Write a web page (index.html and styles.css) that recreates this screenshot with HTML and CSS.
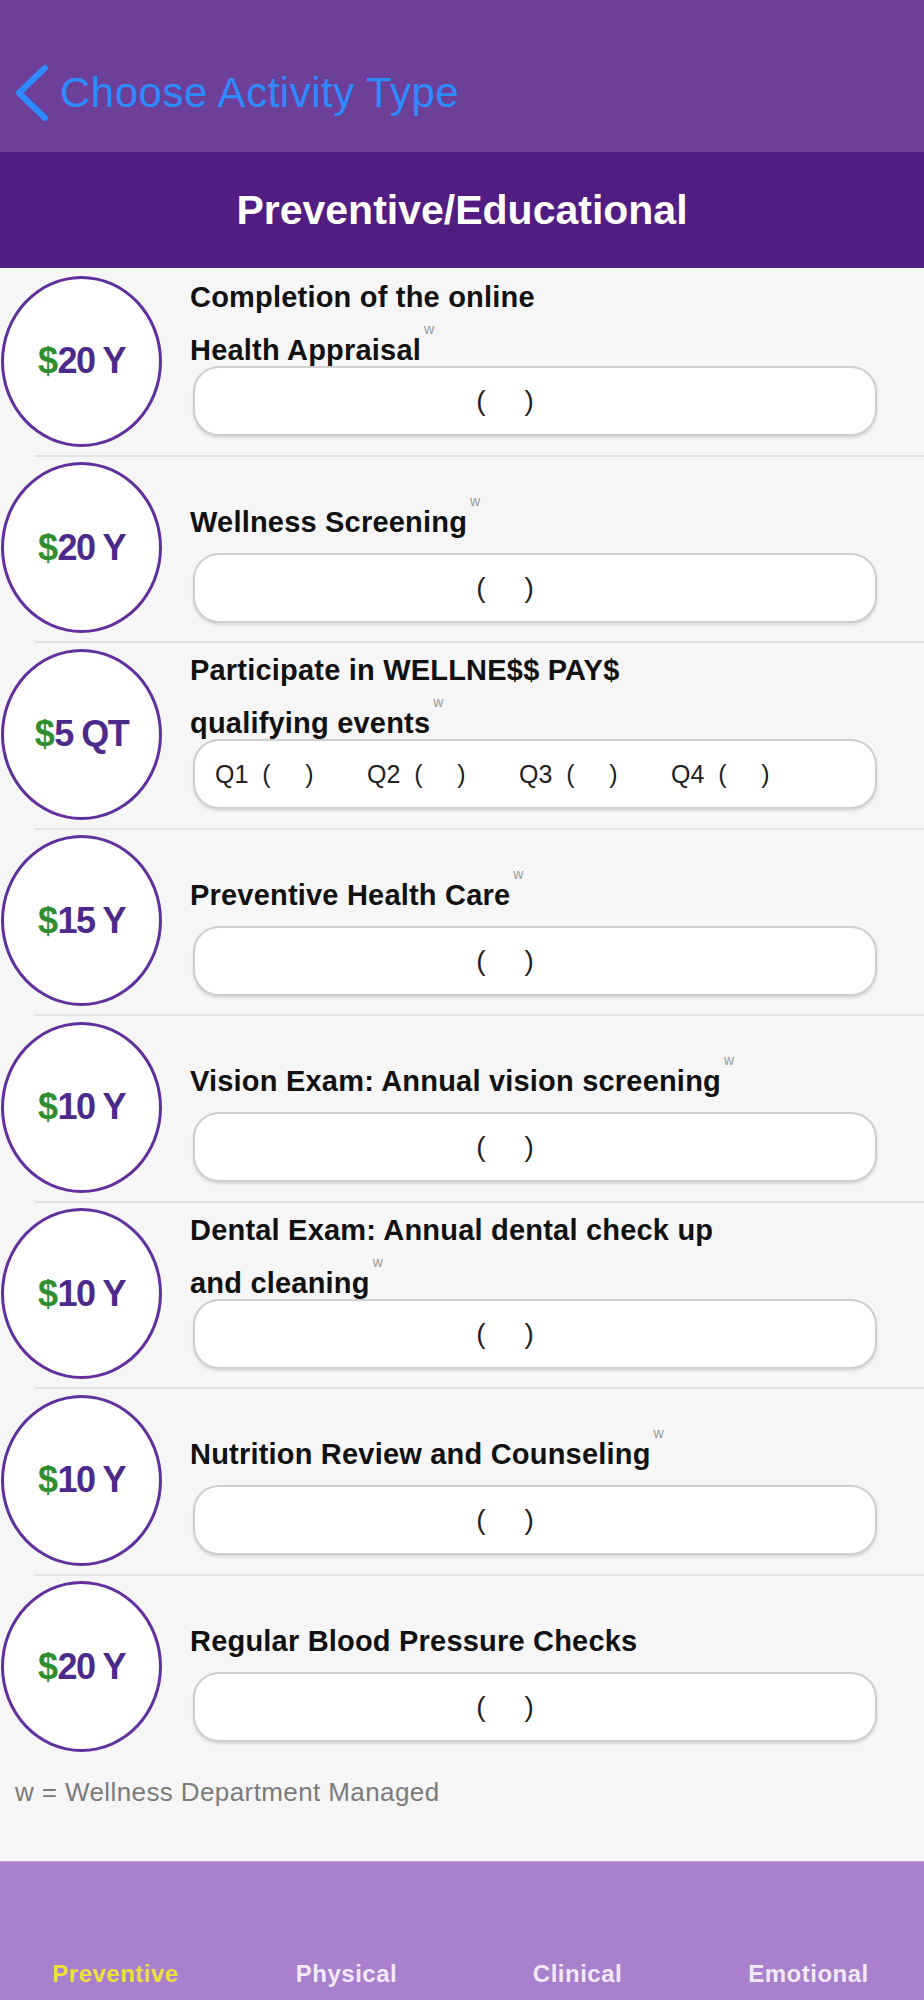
FILE: index.html
```html
<!DOCTYPE html>
<html lang="en">

<head>
    <meta charset="UTF-8">
    <meta name="viewport" content="width=device-width, initial-scale=1.0">
    <title>Preventive/Educational</title>
    <link rel="stylesheet" href="styles.css">
</head>

<body>
    <div class="page">
        <!-- back bar -->
        <div class="nav">
            <svg class="back" width="34" height="60" viewBox="0 0 34 60">
                <polyline points="31,5 5,30 31,55" fill="none" stroke="#2d8bff" stroke-width="6"
                    stroke-linecap="round" stroke-linejoin="round" />
            </svg>
            <span class="back-text">Choose Activity Type</span>
        </div>
        <!-- category title -->
        <div class="section-title">Preventive/Educational</div>

        <div class="main">
            <div class="list">
                <div class="row">
                    <div class="badge"><span class="dollar">$</span>20 Y</div>
                    <div class="item">
                        <div class="label two">Completion of the online<br>Health Appraisal<span class="w">w</span></div>
                        <div class="field">(     )</div>
                    </div>
                </div>
                <div class="row">
                    <div class="badge"><span class="dollar">$</span>20 Y</div>
                    <div class="item">
                        <div class="label">Wellness Screening<span class="w">w</span></div>
                        <div class="field">(     )</div>
                    </div>
                </div>
                <div class="row">
                    <div class="badge"><span class="dollar">$</span>5 QT</div>
                    <div class="item">
                        <div class="label two">Participate in WELLNE$$ PAY$<br>qualifying events<span class="w">w</span></div>
                        <!-- quarters -->
                        <div class="field quarters">
                            <span>Q1  (     )</span><span>Q2  (     )</span><span>Q3  (     )</span><span>Q4  (     )</span>
                        </div>
                    </div>
                </div>
                <div class="row">
                    <div class="badge"><span class="dollar">$</span>15 Y</div>
                    <div class="item">
                        <div class="label">Preventive Health Care<span class="w">w</span></div>
                        <div class="field">(     )</div>
                    </div>
                </div>
                <div class="row">
                    <div class="badge"><span class="dollar">$</span>10 Y</div>
                    <div class="item">
                        <div class="label">Vision Exam: Annual vision screening<span class="w">w</span></div>
                        <div class="field">(     )</div>
                    </div>
                </div>
                <div class="row">
                    <div class="badge"><span class="dollar">$</span>10 Y</div>
                    <div class="item">
                        <div class="label two">Dental Exam: Annual dental check up<br>and cleaning<span class="w">w</span></div>
                        <div class="field">(     )</div>
                    </div>
                </div>
                <div class="row">
                    <div class="badge"><span class="dollar">$</span>10 Y</div>
                    <div class="item">
                        <div class="label">Nutrition Review and Counseling<span class="w">w</span></div>
                        <div class="field">(     )</div>
                    </div>
                </div>
                <div class="row">
                    <div class="badge"><span class="dollar">$</span>20 Y</div>
                    <div class="item">
                        <div class="label">Regular Blood Pressure Checks</div>
                        <div class="field">(     )</div>
                    </div>
                </div>
            </div>
            <div class="note">w = Wellness Department Managed</div>
        </div>

        <!-- tab bar -->
        <div class="tabs">
            <div class="tab active">Preventive</div>
            <div class="tab">Physical</div>
            <div class="tab">Clinical</div>
            <div class="tab">Emotional</div>
        </div>
    </div>
</body>

</html>
```

FILE: styles.css
```css
body {
    margin: 0;
    padding: 0;
    font-family: "Liberation Sans", Arial, sans-serif;
    background: #f6f6f6;
}

.page {
    display: flex;
    flex-direction: column;
    min-height: 2000px;
}

.nav {
    height: 152px;
    box-sizing: border-box;
    padding: 34px 0 0 14px;
    display: flex;
    align-items: center;
    background-color: #6c3f98;
}

.back-text {
    margin-left: 12px;
    color: #2d8bff;
    font-size: 42px;
    letter-spacing: 0.5px;
}

.section-title {
    height: 116px;
    display: flex;
    align-items: center;
    justify-content: center;
    background-color: #521d82;
    color: #fff;
    font-size: 41px;
    font-weight: bold;
}

.main {
    flex: 1;
}

.row {
    height: 186.5px;
    box-sizing: border-box;
    padding-left: 1px;
    display: flex;
    align-items: center;
}

.row + .row {
    background: linear-gradient(#e2e2e2, #e2e2e2) 35px 0 / 100% 2px no-repeat;
}

.badge {
    flex-shrink: 0;
    width: 161px;
    height: 171px;
    box-sizing: border-box;
    border: 3px solid #62309e;
    border-radius: 50%;
    background: #fff;
    display: flex;
    align-items: center;
    justify-content: center;
    color: #4b2a8c;
    font-size: 36px;
    font-weight: bold;
    letter-spacing: -1.5px;
}

.badge .dollar {
    color: #2f8f2f;
    margin-right: 1px;
}

.item {
    flex: 1;
    align-self: flex-start;
    margin: 0 47px 0 28px;
}

.label {
    height: 98px;
    box-sizing: border-box;
    padding-top: 41px;
    line-height: 53px;
    color: #111;
    font-size: 29px;
    font-weight: bold;
    letter-spacing: 0.2px;
}

.label.two {
    padding-top: 3px;
}

.w {
    margin-left: 3px;
    vertical-align: 26px;
    line-height: 0;
    color: #999;
    font-size: 14px;
    font-weight: normal;
}

.field {
    height: 70px;
    box-sizing: border-box;
    margin-left: 3px;
    padding-right: 60px;
    border: 2px solid #cfcfcf;
    border-radius: 26px;
    background: #fff;
    box-shadow: 0 2px 3px rgba(0, 0, 0, .12);
    display: flex;
    align-items: center;
    justify-content: center;
    white-space: pre;
    color: #222;
    font-size: 28px;
}

.field.quarters {
    justify-content: flex-start;
    padding: 0 0 0 20px;
    font-size: 25px;
}

.field.quarters span {
    width: 152px;
}

.note {
    padding: 17px 0 0 15px;
    line-height: 30px;
    color: #7b7b7b;
    font-size: 26px;
    letter-spacing: 0.4px;
}

.tabs {
    height: 139px;
    box-sizing: border-box;
    padding-bottom: 11px;
    display: grid;
    grid-template-columns: repeat(4, 1fr);
    align-items: end;
    border-top: 1px solid #b9a3d3;
    background-color: #a880cd;
}

.tab {
    text-align: center;
    line-height: 30px;
    color: #f1e9f8;
    font-size: 24px;
    font-weight: bold;
    letter-spacing: 0.5px;
}

.tab.active {
    color: #e8e23a;
}
```
